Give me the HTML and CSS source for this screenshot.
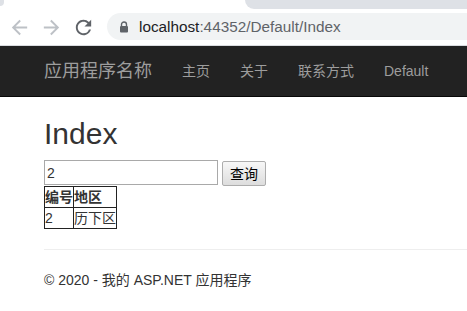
FILE: index.html
```html
<!DOCTYPE html>
<html>
<head>
    <meta charset="utf-8">
    <title>Index - 应用程序名称</title>
    <link rel="stylesheet" href="styles.css">
</head>
<body>
    <!-- browser window chrome -->
    <div class="browser">
        <div class="tabstrip">
            <div class="tab-corner"></div>
            <div class="tab-rest"></div>
        </div>
        <div class="toolbar">
            <svg class="tool-icon muted" viewBox="0 0 24 24"><path d="M20 11H7.83l5.59-5.59L12 4l-8 8 8 8 1.41-1.41L7.83 13H20v-2z"/></svg>
            <svg class="tool-icon muted" viewBox="0 0 24 24"><path d="M12 4l-1.41 1.41L16.17 11H4v2h12.17l-5.58 5.59L12 20l8-8z"/></svg>
            <svg class="tool-icon" viewBox="0 0 24 24"><path d="M17.65 6.35A7.958 7.958 0 0 0 12 4c-4.42 0-7.99 3.58-7.99 8s3.57 8 7.99 8c3.73 0 6.84-2.55 7.73-6h-2.08A5.99 5.99 0 0 1 12 18c-3.31 0-6-2.69-6-6s2.69-6 6-6c1.66 0 3.14.69 4.22 1.78L13 11h7V4l-2.35 2.35z"/></svg>
            <div class="omnibox">
                <svg class="lock" viewBox="0 0 10 12"><path d="M2.5 5V3.5a2.5 2.5 0 0 1 5 0V5" fill="none" stroke="#5f6368" stroke-width="1.4"/><rect x="1" y="5" width="8" height="6.5" rx="1" fill="#5f6368"/></svg>
                <span class="host">localhost</span><span class="path">:44352/Default/Index</span>
            </div>
        </div>
    </div>

    <div class="navbar">
        <div class="container nav-inner">
            <a href="/" class="navbar-brand">应用程序名称</a>
            <a href="/" class="nav-link">主页</a>
            <a href="/Home/About" class="nav-link">关于</a>
            <a href="/Home/Contact" class="nav-link">联系方式</a>
            <a href="/Default/Index" class="nav-link">Default</a>
        </div>
    </div>

    <div class="body-content">
        <h2>Index</h2>
        <form class="search" method="get" action="/Default/Index">
            <input type="text" name="id" value="2">
            <button type="submit">查询</button>
        </form>
        <table class="result">
            <tr>
                <th>编号</th>
                <th>地区</th>
            </tr>
            <tr>
                <td>2</td>
                <td>历下区</td>
            </tr>
        </table>
        <hr>
        <footer>
            <p>&copy; 2020 - 我的 ASP.NET 应用程序</p>
        </footer>
    </div>
</body>
</html>
```
FILE: styles.css
```css
body {
    margin: 0;
    font-family: "Liberation Sans", Arial, "Noto Sans CJK SC", sans-serif;
    font-size: 14px;
    line-height: 20px;
    color: #333;
    background-color: #fff;
    overflow: hidden;
}

a {
    text-decoration: none;
}

/* browser chrome */
.browser {
    background-color: #fff;
}

.tabstrip {
    display: flex;
    height: 9px;
}

.tab-corner {
    width: 4px;
    height: 6px;
    background-color: #dee1e6;
    border-bottom-right-radius: 4px;
}

.tab-rest {
    margin-left: auto;
    width: 222px;
    background-color: #dee1e6;
    border-bottom-left-radius: 9px;
}

.toolbar {
    display: flex;
    align-items: center;
    height: 37px;
    padding-left: 8px;
    border-bottom: 1px solid #dadce0;
    box-sizing: border-box;
}

.tool-icon {
    width: 23px;
    height: 23px;
    margin-right: 9px;
    margin-top: 1px;
    fill: #5f6368;
}

.tool-icon.muted {
    fill: #bdc1c6;
}

.omnibox {
    display: flex;
    align-items: center;
    flex: 1;
    height: 27px;
    margin-left: 3px;
    margin-top: -1px;
    padding-left: 12px;
    border-radius: 14px 0 0 14px;
    background-color: #f1f3f4;
    font-size: 15.3px;
    white-space: nowrap;
}

.lock {
    width: 10px;
    height: 12px;
    margin-right: 10px;
}

.host {
    color: #202124;
}

.path {
    color: #5f6368;
}

/* site navbar */
.navbar {
    height: 50px;
    background-color: #222;
    border-bottom: 1px solid #080808;
}

.nav-inner {
    display: flex;
    padding-left: 29px;
    white-space: nowrap;
}

.navbar-brand {
    padding: 15px;
    font-size: 18px;
    line-height: 20px;
    color: #9d9d9d;
}

.nav-link {
    padding: 15px;
    line-height: 20px;
    color: #9d9d9d;
}

/* page */
.body-content {
    padding: 0 0 0 44px;
}

h2 {
    margin: 20px 0 10px;
    font-size: 30px;
    font-weight: 500;
    line-height: 33px;
}

.search {
    display: flex;
    align-items: flex-start;
    gap: 4px;
}

.search input {
    width: 174px;
    height: 25px;
    box-sizing: border-box;
    padding: 1px 2px;
    border: 1px solid #a9a9a9;
    font: inherit;
    color: #333;
}

.search button {
    width: 44px;
    height: 25px;
    margin-top: 1px;
    padding: 0;
    border: 1px solid #adadad;
    border-radius: 2px;
    background: linear-gradient(#f7f7f7, #dddddd);
    font: inherit;
    color: #000;
}

.result {
    border-collapse: collapse;
    border: 1px solid #222;
}

.result th,
.result td {
    padding: 0;
    border: 1px solid #222;
    text-align: left;
}

.result th {
    font-weight: bold;
}

hr {
    margin: 20px 0;
    border: 0;
    border-top: 1px solid #eee;
}

footer p {
    margin: 0 0 10px;
}
```
